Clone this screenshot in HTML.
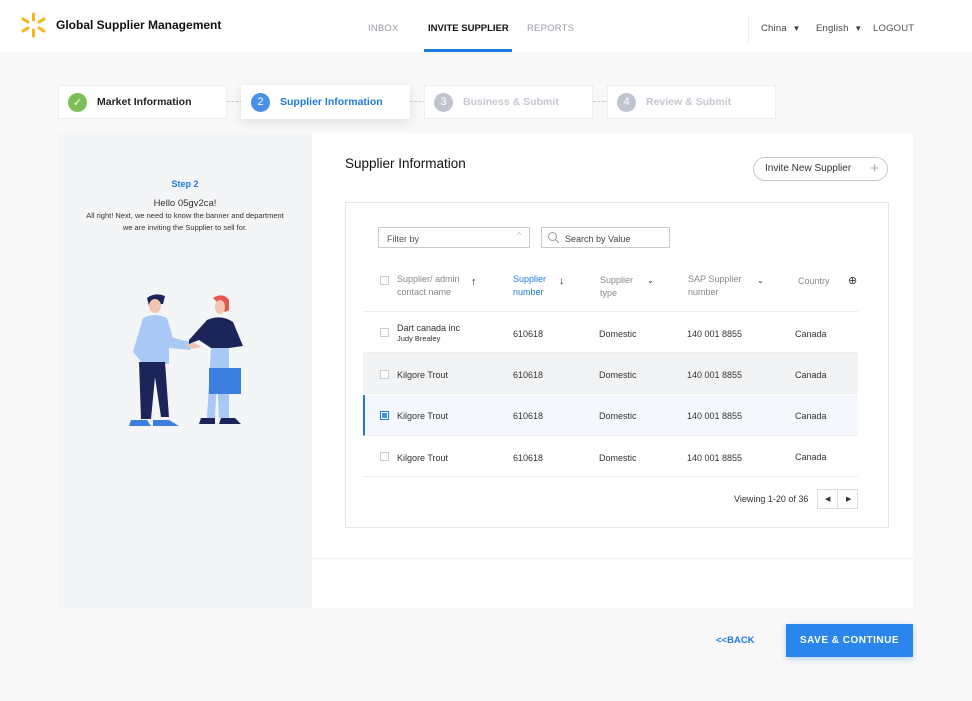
<!DOCTYPE html>
<html><head><meta charset="utf-8"><style>
*{box-sizing:border-box;margin:0;padding:0}
body{width:972px;height:701px;background:#f8f8f9;font-family:"Liberation Sans",sans-serif;position:relative;overflow:hidden;color:#222}
.a{position:absolute}
.hdr{left:0;top:0;width:972px;height:52px;background:#fff}
.nav{font-size:9.5px;letter-spacing:.2px;color:#9a9ea6;top:23px}
.step{height:34px;top:85px;background:#fff;border:1px solid #eceef0;font-size:10.5px;font-weight:bold;display:flex;align-items:center;padding-left:9px}
.circ{width:19px;height:19px;border-radius:50%;color:#fff;font-size:11px;font-weight:normal;display:flex;align-items:center;justify-content:center;margin-right:10px}
.dash{top:101px;width:16px;border-top:1px dashed #ccc}
.cb{width:9px;height:9px;border:1px solid #c8cbd0;background:#fff}
.t{font-size:9px;color:#333}
.h{font-size:9px;color:#888;line-height:13px}
.row{left:363px;width:495px;height:41px;border-bottom:1px solid #eee}
</style></head><body>
<div class="a hdr"></div>
<svg class="a" style="left:20px;top:12px" width="27" height="26" viewBox="0 0 27 26"><g stroke="#f8b51c" stroke-width="3" stroke-linecap="round"><line x1="13.5" y1="2" x2="13.5" y2="8"/><line x1="13.5" y1="18" x2="13.5" y2="24"/><line x1="3" y1="7" x2="8" y2="10"/><line x1="24" y1="7" x2="19" y2="10"/><line x1="3" y1="19" x2="8" y2="16"/><line x1="24" y1="19" x2="19" y2="16"/></g></svg>
<div class="a" style="left:56px;top:18px;font-size:12px;font-weight:bold;color:#111">Global Supplier Management</div>
<div class="a nav" style="left:368px">INBOX</div>
<div class="a nav" style="left:428px;color:#111;font-weight:bold;letter-spacing:0">INVITE SUPPLIER</div>
<div class="a" style="left:424px;top:49px;width:88px;height:3px;background:#1e7be0"></div>
<div class="a nav" style="left:527px">REPORTS</div>
<div class="a" style="left:748px;top:15px;height:28px;border-left:1px solid #eee"></div>
<div class="a nav" style="left:761px;color:#444">China &nbsp;<span style="font-size:8px">▼</span></div>
<div class="a nav" style="left:816px;color:#444">English &nbsp;<span style="font-size:8px">▼</span></div>
<div class="a nav" style="left:873px;color:#555">LOGOUT</div>

<div class="a step" style="left:58px;width:169px"><div class="circ" style="background:#7cc055">✓</div>Market Information</div>
<div class="a dash" style="left:227px"></div>
<div class="a step" style="left:241px;width:169px;color:#1e7be0;box-shadow:0 3px 10px rgba(0,0,0,.1);border-color:#fff"><div class="circ" style="background:#4a90e8">2</div>Supplier Information</div>
<div class="a dash" style="left:410px"></div>
<div class="a step" style="left:424px;width:169px;color:#c5c8cf"><div class="circ" style="background:#bfc4cf">3</div>Business &amp; Submit</div>
<div class="a dash" style="left:593px"></div>
<div class="a step" style="left:607px;width:169px;color:#c5c8cf"><div class="circ" style="background:#bfc4cf">4</div>Review &amp; Submit</div>

<div class="a" style="left:58px;top:133px;width:855px;height:475px;background:#fff"></div>
<div class="a" style="left:58px;top:133px;width:254px;height:475px;background:#f4f5f7"></div>
<div class="a" style="left:58px;top:178px;width:254px;text-align:center;font-size:9px;color:#333;line-height:12px">
<div style="color:#1e7be0;font-weight:bold">Step 2</div>
<div style="margin-top:8px;font-size:9.5px">Hello 05gv2ca!</div>
<div style="font-size:7.5px">All right! Next, we need to know the banner and department<br>we are inviting the Supplier to sell for.</div></div>
<svg class="a" style="left:125px;top:290px" width="125" height="140" viewBox="0 0 125 140">
<path d="M22 8 q8-6 18-2 l-2 8 q-8 0 -14 2z" fill="#1c2559"/><ellipse cx="30" cy="16" rx="6" ry="7" fill="#f0c5b2"/>
<path d="M18 28 q12-6 24 0 l6 20 l18 4 l0 8 l-22 -2 l0 16 l-26 0 l-10 -12z" fill="#a8c8f5"/>
<path d="M14 72 l26 0 l4 55 l-8 0 l-6-40 l-4 42 l-10 0z" fill="#1c2559"/>
<path d="M6 130 l16 0 l4 6 l-22 0z M28 130 l16 0 l10 6 l-26 0z" fill="#3d7fe0"/>
<path d="M60 55 l10 -2 l6 4 l-8 2z" fill="#f0c5b2"/>
<path d="M88 8 q10-6 16 2 l0 10 q-6 4 -6 -2z" fill="#e8554a"/><ellipse cx="95" cy="17" rx="5" ry="7" fill="#f0c5b2"/>
<path d="M82 30 q14-6 26 2 l10 24 l-14 2 l-18 0 l-12 -8 l-10 4 l0 -4z" fill="#1c2559"/>
<path d="M86 58 l18 0 l0 70 l-10 0 l-2 -40 l-2 40 l-8 0z" fill="#a8c8f5"/>
<rect x="84" y="78" width="32" height="26" fill="#3d7fe0"/>
<path d="M76 128 l14 0 l0 6 l-16 0z M96 128 l14 0 l6 6 l-22 0z" fill="#1c2559"/>
</svg>

<div class="a" style="left:345px;top:156px;font-size:13.5px;color:#111">Supplier Information</div>
<div class="a" style="left:753px;top:157px;width:135px;height:24px;border:1px solid #c6c9ce;border-radius:12px;font-size:10px;color:#333;padding:5px 0 0 11px">Invite New Supplier<span style="position:absolute;right:8px;top:2px;font-size:15px;color:#aaa">+</span></div>

<div class="a" style="left:345px;top:202px;width:544px;height:326px;border:1px solid #e4e6e9;background:#fff"></div>
<div class="a" style="left:378px;top:227px;width:152px;height:21px;border:1px solid #c6cad0;font-size:9px;color:#555;padding:6px 0 0 8px">Filter by<span style="position:absolute;right:8px;top:3px;color:#bbb;font-size:8px">^</span></div>
<div class="a" style="left:541px;top:227px;width:129px;height:21px;border:1px solid #c6cad0;font-size:9px;color:#444;padding:6px 0 0 23px">Search by Value
<svg style="position:absolute;left:5px;top:3px" width="13" height="13"><circle cx="5.5" cy="5.5" r="4" fill="none" stroke="#999"/><line x1="8.5" y1="8.5" x2="12" y2="12" stroke="#999"/></svg></div>

<div class="a" style="left:363px;top:262px;width:495px;height:50px;border-bottom:1px solid #eee"></div>
<div class="a cb" style="left:380px;top:276px"></div>
<div class="a h" style="left:397px;top:273px">Supplier/ admin<br>contact name</div>
<div class="a t" style="left:471px;top:276px;font-size:11px">↑</div>
<div class="a h" style="left:513px;top:273px;color:#1e7be0">Supplier<br>number</div>
<div class="a t" style="left:559px;top:275px;font-size:11px">↓</div>
<div class="a h" style="left:600px;top:274px">Supplier<br>type</div>
<div class="a t" style="left:647px;top:276px;font-size:8px">⌄</div>
<div class="a h" style="left:688px;top:273px">SAP Supplier<br>number</div>
<div class="a t" style="left:757px;top:276px;font-size:8px">⌄</div>
<div class="a h" style="left:798px;top:275px">Country</div>
<div class="a t" style="left:848px;top:274px;font-size:11px">⊕</div>

<div class="a row" style="top:312px"></div>
<div class="a row" style="top:353px;background:#f2f3f5"></div>
<div class="a row" style="top:395px;background:#f4f8fc;border-left:2px solid #1e7be0"></div>
<div class="a row" style="top:436px"></div>

<div class="a cb" style="left:380px;top:328px"></div>
<div class="a t" style="left:397px;top:323px">Dart canada inc<br><span style="font-size:7.5px">Judy Brealey</span></div>
<div class="a t" style="left:513px;top:329px">610618</div><div class="a t" style="left:599px;top:329px">Domestic</div><div class="a t" style="left:687px;top:329px">140 001 8855</div><div class="a t" style="left:795px;top:329px">Canada</div>

<div class="a cb" style="left:380px;top:370px"></div>
<div class="a t" style="left:397px;top:370px">Kilgore Trout</div>
<div class="a t" style="left:513px;top:370px">610618</div><div class="a t" style="left:599px;top:370px">Domestic</div><div class="a t" style="left:687px;top:370px">140 001 8855</div><div class="a t" style="left:795px;top:370px">Canada</div>

<div class="a cb" style="left:380px;top:411px;border-color:#1e7be0;padding:1px"><div style="width:5px;height:5px;background:#4a90e8"></div></div>
<div class="a t" style="left:397px;top:411px">Kilgore Trout</div>
<div class="a t" style="left:513px;top:411px">610618</div><div class="a t" style="left:599px;top:411px">Domestic</div><div class="a t" style="left:687px;top:411px">140 001 8855</div><div class="a t" style="left:795px;top:411px">Canada</div>

<div class="a cb" style="left:380px;top:452px"></div>
<div class="a t" style="left:397px;top:453px">Kilgore Trout</div>
<div class="a t" style="left:513px;top:453px">610618</div><div class="a t" style="left:599px;top:453px">Domestic</div><div class="a t" style="left:687px;top:453px">140 001 8855</div><div class="a t" style="left:795px;top:452px">Canada</div>

<div class="a t" style="left:734px;top:494px">Viewing 1-20 of 36</div>
<div class="a" style="left:817px;top:489px;width:41px;height:20px;border:1px solid #ddd;font-size:7px;color:#333"><span style="position:absolute;left:7px;top:5px">◀</span><span style="position:absolute;left:19px;top:0;height:18px;border-left:1px solid #ddd"></span><span style="position:absolute;left:28px;top:5px">▶</span></div>

<div class="a" style="left:312px;top:558px;width:601px;border-top:1px solid #eee"></div>
<div class="a" style="left:716px;top:635px;font-size:9.5px;font-weight:bold;color:#1e7be0">&lt;&lt;BACK</div>
<div class="a" style="left:786px;top:624px;width:127px;height:33px;background:#2a86ec;color:#fff;font-size:10px;font-weight:bold;letter-spacing:.5px;text-align:center;line-height:33px;box-shadow:0 2px 6px rgba(30,123,224,.3)">SAVE &amp; CONTINUE</div>
</body></html>
